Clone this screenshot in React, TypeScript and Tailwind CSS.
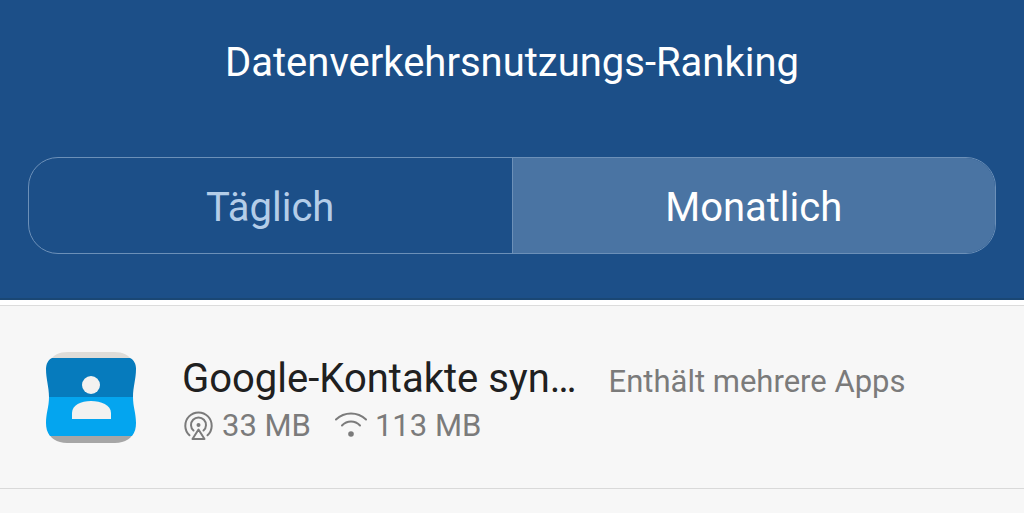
import React, { useState } from "react";

const tabs = [
  { id: "daily", label: "Täglich" },
  { id: "monthly", label: "Monatlich" },
];

const apps = [
  {
    name: "Google-Kontakte syn…",
    note: "Enthält mehrere Apps",
    mobile: "33 MB",
    wifi: "113 MB",
  },
];

const ContactsIcon = () => (
  <svg className="size-[91px] shrink-0" viewBox="0 0 91 91" aria-hidden="true">
    <path d="M22 0h46c9 0 15 3 18 9H4C7 3 13 0 22 0z" fill="#dedcd8" />
    <path d="M2 78h86c-1 8-9 13-19 13H21C11 91 3 86 2 78z" fill="#a6a6a6" />
    <path
      d="M6 6h78c4 2 6 6 6 11 0 10-3 18-3 28v2H3v-2C3 35 0 27 0 17 0 12 2 8 6 6z"
      fill="#067bbd"
    />
    <path
      d="M3 45h84c0 10 3 16 3 26 0 5-1 9-4 13H4c-3-4-4-8-4-13 0-10 3-16 3-26z"
      fill="#04a5ef"
    />
    <circle cx="45" cy="33" r="9" fill="#f3f2f0" />
    <path d="M26 67v-6c0-8 9-12 19-12s20 4 20 12v6z" fill="#f3f2f0" />
  </svg>
);

const MobileIcon = () => (
  <svg
    className="size-8 shrink-0"
    viewBox="-2 0 32 32"
    fill="none"
    stroke="#7b7b7b"
    strokeWidth="2"
    strokeLinecap="round"
    strokeLinejoin="round"
    aria-hidden="true"
  >
    <path d="M5.5 25.3a13.2 13.2 0 1 1 18 0" />
    <path d="M9.5 20.5a7.5 7.5 0 1 1 10 0" />
    <circle cx="14.5" cy="15" r="2" fill="#7b7b7b" stroke="none" />
    <path d="M14.5 19.5l6 9.5h-12z" />
  </svg>
);

const WifiIcon = () => (
  <svg
    className="size-8 shrink-0"
    viewBox="0 0 32 32"
    fill="none"
    stroke="#7b7b7b"
    strokeWidth="2"
    strokeLinecap="round"
    aria-hidden="true"
  >
    <path d="M1 9.5c8.5-8 21.5-8 30 0" />
    <path d="M7 15.5c5-5.3 13-5.3 18 0" />
    <circle cx="16" cy="24" r="2.8" fill="#7b7b7b" stroke="none" />
  </svg>
);

const App = () => {
  const [active, setActive] = useState("monthly");

  return (
    <div className="min-h-screen bg-[#f7f7f7] font-['Roboto',sans-serif]">
      <header className="bg-[#1c4f88] border-b-2 border-[#1a4774] px-7 pt-[39px] pb-11">
        <h1 className="text-center text-[40px] leading-[48px] text-white">
          Datenverkehrsnutzungs-Ranking
        </h1>
        <div className="mt-[70px] flex h-[97px] overflow-hidden rounded-[30px] border border-[#6c90b8]">
          {tabs.map((tab) => (
            <button
              key={tab.id}
              type="button"
              aria-pressed={active === tab.id}
              onClick={() => setActive(tab.id)}
              className={
                active === tab.id
                  ? "flex-1 border-[#6c90b8] bg-[#4a74a3] pt-1 text-[40px] leading-[48px] text-white first:border-r"
                  : "flex-1 border-[#6c90b8] pt-1 text-[40px] leading-[48px] text-[#b4cde8] first:border-r"
              }
            >
              {tab.label}
            </button>
          ))}
        </div>
      </header>

      <main className="border-t-[5px] border-white">
        <ul className="border-t border-[#dcdcdc]">
          {apps.map((app) => (
            <li
              key={app.name}
              className="flex items-start border-b border-[#d9d9d9] px-[46px] pt-[46px] pb-[39px]"
            >
              <ContactsIcon />
              <div className="ml-[45px] min-w-0 flex-1 pt-[3px]">
                <div className="flex items-baseline gap-8">
                  <h2 className="shrink-0 text-[40px] leading-[48px] text-[#202020]">
                    {app.name}
                  </h2>
                  <span className="text-[31px] leading-[40px] text-[#7b7b7b]">
                    {app.note}
                  </span>
                </div>
                <div className="flex gap-6 text-[31px] leading-[46px] text-[#7b7b7b]">
                  <span className="flex items-center gap-2">
                    <MobileIcon />
                    {app.mobile}
                  </span>
                  <span className="flex items-center gap-2">
                    <WifiIcon />
                    {app.wifi}
                  </span>
                </div>
              </div>
            </li>
          ))}
        </ul>
      </main>
    </div>
  );
};

export default App;
